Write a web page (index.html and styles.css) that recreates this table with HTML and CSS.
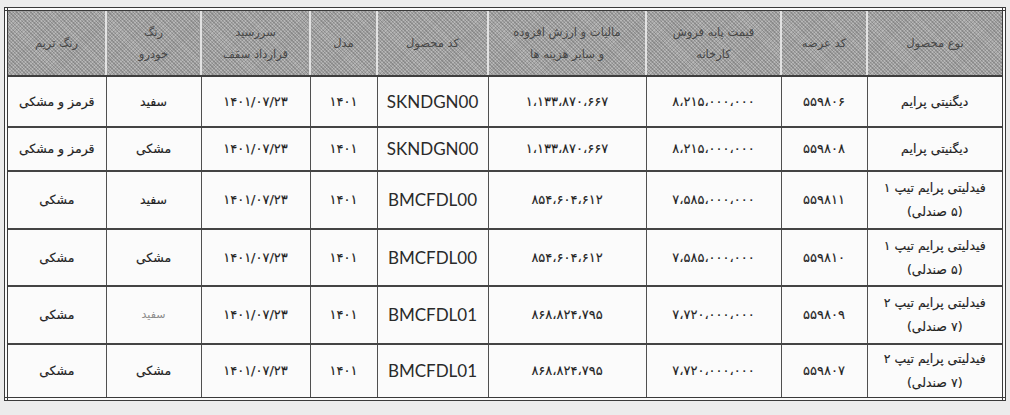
FILE: index.html
```html
<!DOCTYPE html>
<html lang="fa">
<head>
<meta charset="utf-8">
<title>جدول قیمت</title>
<link rel="stylesheet" href="styles.css">
</head>
<body>
<div class="sheet">
<table class="price" dir="rtl">
  <colgroup>
    <col class="c-type">
    <col class="c-offer">
    <col class="c-base">
    <col class="c-tax">
    <col class="c-code">
    <col class="c-model">
    <col class="c-due">
    <col class="c-color">
    <col class="c-trim">
  </colgroup>
  <thead>
    <tr class="head">
      <th>نوع محصول</th>
      <th>کد عرضه</th>
      <th>قیمت پایه فروش<br>کارخانه</th>
      <th>مالیات و ارزش افزوده<br>و سایر هزینه ها</th>
      <th>کد محصول</th>
      <th>مدل</th>
      <th>سررسید<br>قرارداد سقف</th>
      <th>رنگ<br>خودرو</th>
      <th>رنگ تریم</th>
    </tr>
  </thead>
  <tbody>
    <tr class="r1">
      <td>دیگنیتی پرایم</td>
      <td class="num">۵۵۹۸۰۶</td>
      <td class="num">۸،۲۱۵،۰۰۰،۰۰۰</td>
      <td class="num">۱،۱۳۳،۸۷۰،۶۶۷</td>
      <td class="lat">SKNDGN00</td>
      <td class="num">۱۴۰۱</td>
      <td class="num">۱۴۰۱/۰۷/۲۳</td>
      <td>سفید</td>
      <td>قرمز و مشکی</td>
    </tr>
    <tr class="r2">
      <td>دیگنیتی پرایم</td>
      <td class="num">۵۵۹۸۰۸</td>
      <td class="num">۸،۲۱۵،۰۰۰،۰۰۰</td>
      <td class="num">۱،۱۳۳،۸۷۰،۶۶۷</td>
      <td class="lat">SKNDGN00</td>
      <td class="num">۱۴۰۱</td>
      <td class="num">۱۴۰۱/۰۷/۲۳</td>
      <td>مشکی</td>
      <td>قرمز و مشکی</td>
    </tr>
    <tr class="r3">
      <td>فیدلیتی پرایم تیپ ۱<br>(۵ صندلی)</td>
      <td class="num">۵۵۹۸۱۱</td>
      <td class="num">۷،۵۸۵،۰۰۰،۰۰۰</td>
      <td class="num">۸۵۴،۶۰۴،۶۱۲</td>
      <td class="lat">BMCFDL00</td>
      <td class="num">۱۴۰۱</td>
      <td class="num">۱۴۰۱/۰۷/۲۳</td>
      <td>سفید</td>
      <td>مشکی</td>
    </tr>
    <tr class="r4">
      <td>فیدلیتی پرایم تیپ ۱<br>(۵ صندلی)</td>
      <td class="num">۵۵۹۸۱۰</td>
      <td class="num">۷،۵۸۵،۰۰۰،۰۰۰</td>
      <td class="num">۸۵۴،۶۰۴،۶۱۲</td>
      <td class="lat">BMCFDL00</td>
      <td class="num">۱۴۰۱</td>
      <td class="num">۱۴۰۱/۰۷/۲۳</td>
      <td>مشکی</td>
      <td>مشکی</td>
    </tr>
    <tr class="r5">
      <td>فیدلیتی پرایم تیپ ۲<br>(۷ صندلی)</td>
      <td class="num">۵۵۹۸۰۹</td>
      <td class="num">۷،۷۲۰،۰۰۰،۰۰۰</td>
      <td class="num">۸۶۸،۸۲۴،۷۹۵</td>
      <td class="lat">BMCFDL01</td>
      <td class="num">۱۴۰۱</td>
      <td class="num">۱۴۰۱/۰۷/۲۳</td>
      <td class="faded">سفید</td>
      <td>مشکی</td>
    </tr>
    <tr class="r6">
      <td>فیدلیتی پرایم تیپ ۲<br>(۷ صندلی)</td>
      <td class="num">۵۵۹۸۰۷</td>
      <td class="num">۷،۷۲۰،۰۰۰،۰۰۰</td>
      <td class="num">۸۶۸،۸۲۴،۷۹۵</td>
      <td class="lat">BMCFDL01</td>
      <td class="num">۱۴۰۱</td>
      <td class="num">۱۴۰۱/۰۷/۲۳</td>
      <td>مشکی</td>
      <td>مشکی</td>
    </tr>
  </tbody>
</table>
</div>
</body>
</html>
```

FILE: styles.css
```css
html, body {
  margin: 0;
  padding: 0;
  background: #ececec;
}

.sheet {
  padding: 7px 3px 0 4px;
  width: 1006px;
  height: 410px;
  box-sizing: border-box;
}

.price {
  width: 1002px;
  table-layout: fixed;
  border-collapse: collapse;
  border: 4px double #3a3a3a;
  background: #fbfbfb;
  font-family: "DejaVu Sans", sans-serif;
  color: #222;
}

.c-type  { width: 137px; }
.c-offer { width: 86px; }
.c-base  { width: 135px; }
.c-tax   { width: 158px; }
.c-code  { width: 111px; }
.c-model { width: 67px; }
.c-due   { width: 109px; }
.c-color { width: 95px; }
.c-trim  { width: 100px; }

.price th,
.price td {
  padding: 0 4px;
  text-align: center;
  vertical-align: middle;
  overflow: hidden;
  white-space: nowrap;
}

.price th {
  height: 64px;
  font-size: 11.5px;
  font-weight: normal;
  line-height: 22px;
  color: #474747;
  background-color: #a4a4a4;
  background-image:
    repeating-linear-gradient(45deg, rgba(70,70,70,0.28) 0 1px, transparent 1px 2.5px),
    repeating-linear-gradient(-45deg, rgba(230,230,230,0.3) 0 1px, transparent 1px 2.5px);
  border-left: 2px solid #e2e2e2;
  border-bottom: 2px solid #3e3e3e;
}

.price th:last-child {
  border-left: none;
}

.price td {
  font-size: 12.5px;
  line-height: 24px;
  -webkit-text-stroke: 0.15px #222;
  border-left: 1px solid #505050;
  border-bottom: 2px solid #444;
}

.price td:last-child {
  border-left: none;
}

.price tr:last-child td {
  border-bottom: none;
}

.price td.num {
  font-size: 13px;
  letter-spacing: 1.4px;
}

.price td.lat {
  font-family: Lato, "Liberation Sans", sans-serif;
  font-size: 17px;
  color: #2a2a2a;
  -webkit-text-stroke: 0;
}

.price td.faded {
  color: #8a8a8a;
  font-size: 11px;
  -webkit-text-stroke: 0;
}

.r1 { height: 51px; }
.r2 { height: 44px; }
.r3 { height: 58px; }
.r4 { height: 57px; }
.r5 { height: 58px; }
.r6 { height: 55px; }
```
